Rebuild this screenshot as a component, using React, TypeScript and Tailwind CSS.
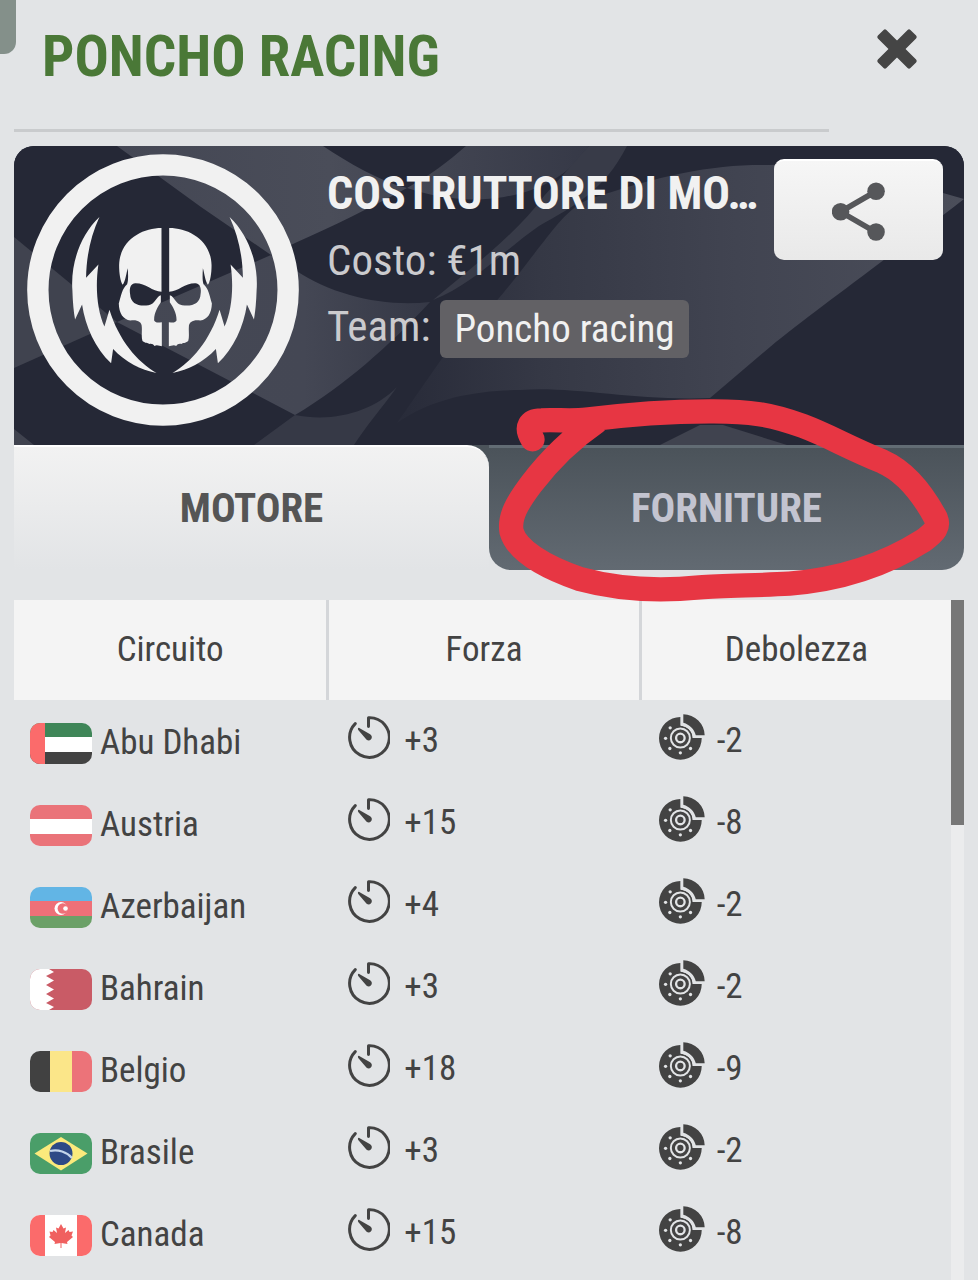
import type { ReactNode } from "react";

const CONDENSED =
  "font-['Roboto_Condensed','Liberation_Sans_Narrow','Roboto',sans-serif]";

type FlagCode = "ae" | "at" | "az" | "bh" | "be" | "br" | "ca";

interface Circuit {
  flag: FlagCode;
  name: string;
  strength: string;
  weakness: string;
}

const circuits: Circuit[] = [
  { flag: "ae", name: "Abu Dhabi", strength: "+3", weakness: "-2" },
  { flag: "at", name: "Austria", strength: "+15", weakness: "-8" },
  { flag: "az", name: "Azerbaijan", strength: "+4", weakness: "-2" },
  { flag: "bh", name: "Bahrain", strength: "+3", weakness: "-2" },
  { flag: "be", name: "Belgio", strength: "+18", weakness: "-9" },
  { flag: "br", name: "Brasile", strength: "+3", weakness: "-2" },
  { flag: "ca", name: "Canada", strength: "+15", weakness: "-8" },
];

const flagArt: Record<FlagCode, ReactNode> = {
  ae: (
    <>
      <rect width="62" height="14" fill="#3f8658" />
      <rect y="14" width="62" height="15" fill="#fff" />
      <rect y="29" width="62" height="12" fill="#434343" />
      <rect width="15" height="41" fill="#fb6b6b" />
    </>
  ),
  at: (
    <>
      <rect width="62" height="41" fill="#ea7379" />
      <rect y="14" width="62" height="15" fill="#fff" />
    </>
  ),
  az: (
    <>
      <rect width="62" height="14" fill="#62b5e5" />
      <rect y="14" width="62" height="15" fill="#ee7078" />
      <rect y="29" width="62" height="12" fill="#6ba067" />
      <circle cx="31" cy="21.500" r="6.500" fill="#fff" />
      <circle cx="32.800" cy="21.500" r="5.200" fill="#ee7078" />
      <circle cx="35.500" cy="21.500" r="2.300" fill="#fff" />
    </>
  ),
  bh: (
    <>
      <rect width="62" height="41" fill="#c95b66" />
      <path
        d="M0 0H19L24 3L16 7L24 11.500L16 16L24 20.500L16 25L24 29.500L16 34L24 38L19 41H0Z"
        fill="#fff"
      />
    </>
  ),
  be: (
    <>
      <rect width="21" height="41" fill="#414141" />
      <rect x="20" width="22" height="41" fill="#fbe689" />
      <rect x="42" width="20" height="41" fill="#ec7379" />
    </>
  ),
  br: (
    <>
      <rect width="62" height="41" fill="#4a9e69" />
      <path d="M31 4L57.500 20.500L31 37.500L4.500 20.500Z" fill="#fbea7c" />
      <circle cx="31" cy="20.500" r="11.500" fill="#2d4a86" />
      <path
        d="M20 18C28 16 37 19 42 25"
        fill="none"
        stroke="#c3d5ea"
        strokeWidth="2.200"
      />
    </>
  ),
  ca: (
    <>
      <rect width="62" height="41" fill="#fff" />
      <rect width="15" height="41" fill="#fb6b6b" />
      <rect x="47" width="15" height="41" fill="#fb6b6b" />
      <path
        d="M31 9L33.500 13.500L36 12.500L35 18L38.500 15L39.500 17L43 16.500L41.500 20.500L43 22L37 27L37.500 29L31.500 28V33H30.500V28L24.500 29L25 27L19 22L20.500 20.500L19.500 16.500L22.500 17L23.500 15L27 18L26 12.500L28.500 13.500Z"
        fill="#f0605f"
      />
    </>
  ),
};

function Flag({ code }: { code: FlagCode }) {
  return (
    <svg
      viewBox="0 0 62 41"
      className="h-[41px] w-[62px] shrink-0 rounded-[10px]"
      aria-hidden="true"
    >
      {flagArt[code]}
    </svg>
  );
}

function TimerIcon() {
  return (
    <svg
      viewBox="24 44 130 130"
      className="mb-2 size-[43px] shrink-0"
      fill="none"
      stroke="#434343"
      aria-hidden="true"
    >
      <path
        d="M89 76V49A60 60 0 1 1 49 67"
        strokeWidth="9"
        strokeLinecap="round"
        strokeLinejoin="round"
      />
      <path
        d="M61 80C57 79 56 83 58 86L80 112C84 118 91 120 96 115C101 110 100 103 94 99Z"
        fill="#434343"
        stroke="none"
      />
    </svg>
  );
}

function BrakeIcon() {
  return (
    <svg
      viewBox="56 40 140 140"
      className="mb-2 size-[46px] shrink-0"
      aria-hidden="true"
    >
      <path
        d="M122 49V76A38 38 0 0 1 158 113H186A65 65 0 1 1 122 49Z"
        fill="#434343"
      />
      <circle cx="121" cy="113" r="36" fill="#434343" />
      <g fill="none" stroke="#e2e4e6">
        <circle cx="121" cy="113" r="29" strokeWidth="6" />
        <circle cx="121" cy="113" r="13" strokeWidth="7" />
        <path d="M125 46V72C147 76 160 90 162 109H190" strokeWidth="7" />
      </g>
      <path
        d="M130 41A65 65 0 0 1 195 105H168C163 86 150 73 130 67Z"
        fill="#434343"
      />
      <g fill="#e2e4e6">
        <circle cx="90" cy="82" r="5" />
        <circle cx="76" cy="114" r="5" />
        <circle cx="89" cy="145" r="5" />
        <circle cx="121" cy="158" r="5" />
        <circle cx="152" cy="145" r="5" />
      </g>
    </svg>
  );
}

function CloseIcon() {
  return (
    <svg viewBox="-21 -21 42 42" className="size-[42px]" aria-hidden="true">
      <g fill="#454545">
        <rect x="-23" y="-6" width="46" height="12" rx="2" transform="rotate(45)" />
        <rect x="-23" y="-6" width="46" height="12" rx="2" transform="rotate(-45)" />
      </g>
    </svg>
  );
}

function ShareIcon() {
  return (
    <svg viewBox="216 547 160 176" className="h-[59px] w-[53px]" aria-hidden="true">
      <path
        d="M349 574L242 636L349 698"
        fill="none"
        stroke="#56575a"
        strokeWidth="17"
      />
      <g fill="#56575a">
        <circle cx="349" cy="574" r="26.500" />
        <circle cx="242" cy="636" r="26.500" />
        <circle cx="349" cy="697" r="26.500" />
      </g>
    </svg>
  );
}

function TeamLogo() {
  const bolts =
    "M257 231C200 285 170 370 176 450C177 485 180 515 184 538L205 493C215 560 245 625 292 669L298 626C335 665 380 688 428 698C370 665 315 600 287 509L272 559C250 510 244 440 254 373L217 413C218 345 232 285 257 231Z";
  const half =
    "M443 264C385 264 318 300 316 375C316 400 320 425 327 434C336 420 337 400 342 384C343 405 344 420 340 432C325 445 322 465 315 490C316 520 328 538 350 541C370 538 384 545 384 560C385 575 382 590 386 602C395 610 402 606 406 611C414 609 418 612 422 617C430 612 438 618 444 618V546C434 546 427 550 421 541C420 518 432 500 441 486V465C425 470 425 492 404 495C375 500 350 490 349 462C346 445 350 430 364 429C395 428 415 453 443 455Z";
  return (
    <svg
      viewBox="40 42 815 815"
      className="size-[272px] shrink-0"
      role="img"
      aria-label="Poncho racing"
    >
      <circle
        cx="447.500"
        cy="449.500"
        r="375"
        fill="none"
        stroke="#f1f1f1"
        strokeWidth="64"
      />
      <g fill="#f1f1f1">
        <path d={bolts} />
        <path d={bolts} transform="translate(904 0) scale(-1 1)" />
        <path d={half} />
        <path d={half} transform="translate(909 0) scale(-1 1)" />
      </g>
    </svg>
  );
}

function FlagBackdrop() {
  return (
    <svg
      viewBox="0 0 950 299"
      preserveAspectRatio="xMidYMid slice"
      className="absolute inset-0 size-full"
      aria-hidden="true"
    >
      <defs>
        <linearGradient id="clothA" x1="0" y1="0" x2="1" y2="0">
          <stop offset="0" stopColor="#444754" />
          <stop offset="0.450" stopColor="#4a4d59" />
          <stop offset="1" stopColor="#363947" />
        </linearGradient>
        <linearGradient id="clothB" x1="0" y1="0" x2="1" y2="0">
          <stop offset="0" stopColor="#454854" />
          <stop offset="0.600" stopColor="#444754" />
          <stop offset="1" stopColor="#353846" />
        </linearGradient>
        <linearGradient id="clothD" x1="0" y1="0" x2="1" y2="0">
          <stop offset="0" stopColor="#282b39" />
          <stop offset="0.250" stopColor="#353845" />
          <stop offset="0.600" stopColor="#414451" />
          <stop offset="1" stopColor="#4b4e5a" />
        </linearGradient>
      </defs>
      <rect width="950" height="299" fill="#252836" />
      <path
        d="M103 0H309C335 17 365 35 393 42C415 30 435 15 452 0H575C555 30 525 45 490 51C455 57 420 51 393 42C355 62 320 80 281 97L257 109L187 61Z"
        fill="url(#clothA)"
      />
      <path
        d="M103 176L257 109L281 124C320 150 370 161 416 156C375 200 330 240 281 269Z"
        fill="url(#clothB)"
      />
      <path d="M0 91L103 176L0 222Z" fill="#40434f" />
      <path d="M0 283L20 299H0Z" fill="#40434f" />
      <path
        d="M281 269C320 277 360 265 383 241C368 262 352 280 340 299H240Z"
        fill="#363946"
      />
      <path
        d="M575 0H613C590 45 560 60 525 80C490 104 460 138 419 154C460 120 505 85 530 50Z"
        fill="#383b48"
      />
      <path
        d="M929 47C870 22 810 17 756 19C700 18 650 28 573 54C550 65 535 90 523 104C500 135 465 178 429 211L383 277C420 250 470 244 506 244C560 240 620 255 696 252L756 201C800 165 850 130 950 53Z"
        fill="url(#clothD)"
      />
      <path d="M646 299L686 279H709L773 299Z" fill="#40434f" />
    </svg>
  );
}

function MarkerCircle() {
  return (
    <svg
      viewBox="85 57 1360 610"
      className="pointer-events-none absolute -top-[46px] left-[9px] z-10 h-[203px] w-[453px]"
      aria-hidden="true"
    >
      <path
        d="M188 178C165 140 180 121 215 121C260 119 310 124 350 119C460 105 580 94 720 94C840 93 905 103 1000 138C1080 168 1130 200 1240 245C1310 276 1365 350 1400 415C1410 440 1400 455 1360 484C1240 560 1110 600 960 612C860 618 760 616 690 623C560 636 440 628 330 598C220 560 140 510 125 455C117 410 145 365 185 312C240 240 300 180 380 125"
        fill="none"
        stroke="#e73643"
        strokeWidth="73"
        strokeLinecap="round"
        strokeLinejoin="round"
      />
    </svg>
  );
}

export default function App() {
  return (
    <div
      className={`relative flex min-h-screen flex-col bg-[#e2e4e6] px-3.5 text-[#434343] ${CONDENSED}`}
    >
      <div className="absolute top-0 left-0 h-[54px] w-4 rounded-br-xl bg-[#84908a]" />

      <header className="flex items-start">
        <h1 className="h-[132px] flex-1 border-b-[3px] border-[#c9cbcd] px-7 pt-[21px] text-[57px] leading-[72px] font-bold text-[#4a7837]">
          PONCHO RACING
        </h1>
        <button
          type="button"
          aria-label="Chiudi"
          className="flex h-[98px] w-[135px] items-center justify-center"
        >
          <CloseIcon />
        </button>
      </header>

      <section className="relative mt-3.5 flex h-[299px] items-start overflow-hidden rounded-t-[20px] bg-[#252836] pr-[21px] pl-[13px]">
        <FlagBackdrop />
        <div className="relative mt-2">
          <TeamLogo />
        </div>
        <div className="relative ml-7 min-w-0 flex-1 pt-[17px] text-[43px] text-[#cbcbce]">
          <h2 className="truncate text-[46px] leading-[60px] font-bold text-[#f1f1f1]">
            COSTRUTTORE DI MO…
          </h2>
          <p className="mt-[7px] leading-[60px]">Costo: €1m</p>
          <p className="mt-1 flex items-center leading-[60px]">
            Team:
            <a
              href="#team"
              className="mt-1.5 ml-2.5 rounded-md bg-[#626165] px-3.5 text-[39px] leading-[58px] text-[#f1f1f1]"
            >
              Poncho racing
            </a>
          </p>
        </div>
        <button
          type="button"
          aria-label="Condividi"
          className="relative mt-[13px] ml-2 flex h-[101px] w-[169px] shrink-0 items-center justify-center rounded-[10px] border-t-2 border-white bg-linear-to-b from-[#f6f6f6] to-[#e9e9e9] pt-0.5"
        >
          <ShareIcon />
        </button>
      </section>

      <nav className="grid h-[125px] grid-cols-2 text-[41px] font-bold">
        <div className="grid bg-[#4b535a]">
          <button
            type="button"
            className="rounded-tr-[22px] border-t-2 border-white bg-linear-to-b from-[#f2f2f2] to-[#e2e4e6] text-[#555]"
          >
            MOTORE
          </button>
        </div>
        <div className="relative grid">
          <button
            type="button"
            className="rounded-b-[22px] border-t-[3px] border-[#626c74] bg-linear-to-b from-[#4b535a] to-[#626a72] text-[#c3c4d0]"
          >
            FORNITURE
          </button>
          <MarkerCircle />
        </div>
      </nav>

      <main className="mt-[30px] flex flex-1 text-[35px]">
        <div className="flex-1">
          <table className="w-full table-fixed border-separate border-spacing-0">
            <thead>
              <tr className="h-[100px] bg-[#f4f4f4]">
                <th className="font-normal">Circuito</th>
                <th className="border-l-[3px] border-[#d4d6d9] font-normal">Forza</th>
                <th className="border-l-[3px] border-[#d4d6d9] font-normal">Debolezza</th>
              </tr>
            </thead>
            <tbody>
              {circuits.map((c) => (
                <tr key={c.name} className="h-[82px]">
                  <td className="p-0 pt-[5px] pl-4">
                    <div className="flex items-center gap-2">
                      <Flag code={c.flag} />
                      <span>{c.name}</span>
                    </div>
                  </td>
                  <td className="p-0 pl-[21px]">
                    <div className="flex items-center gap-3.5">
                      <TimerIcon />
                      <span>{c.strength}</span>
                    </div>
                  </td>
                  <td className="p-0 pl-5">
                    <div className="flex items-center gap-3">
                      <BrakeIcon />
                      <span>{c.weakness}</span>
                    </div>
                  </td>
                </tr>
              ))}
            </tbody>
          </table>
        </div>
        <div className="w-[13px] bg-[#ebeced]">
          <div className="h-[225px] bg-[#777]" />
        </div>
      </main>
    </div>
  );
}
